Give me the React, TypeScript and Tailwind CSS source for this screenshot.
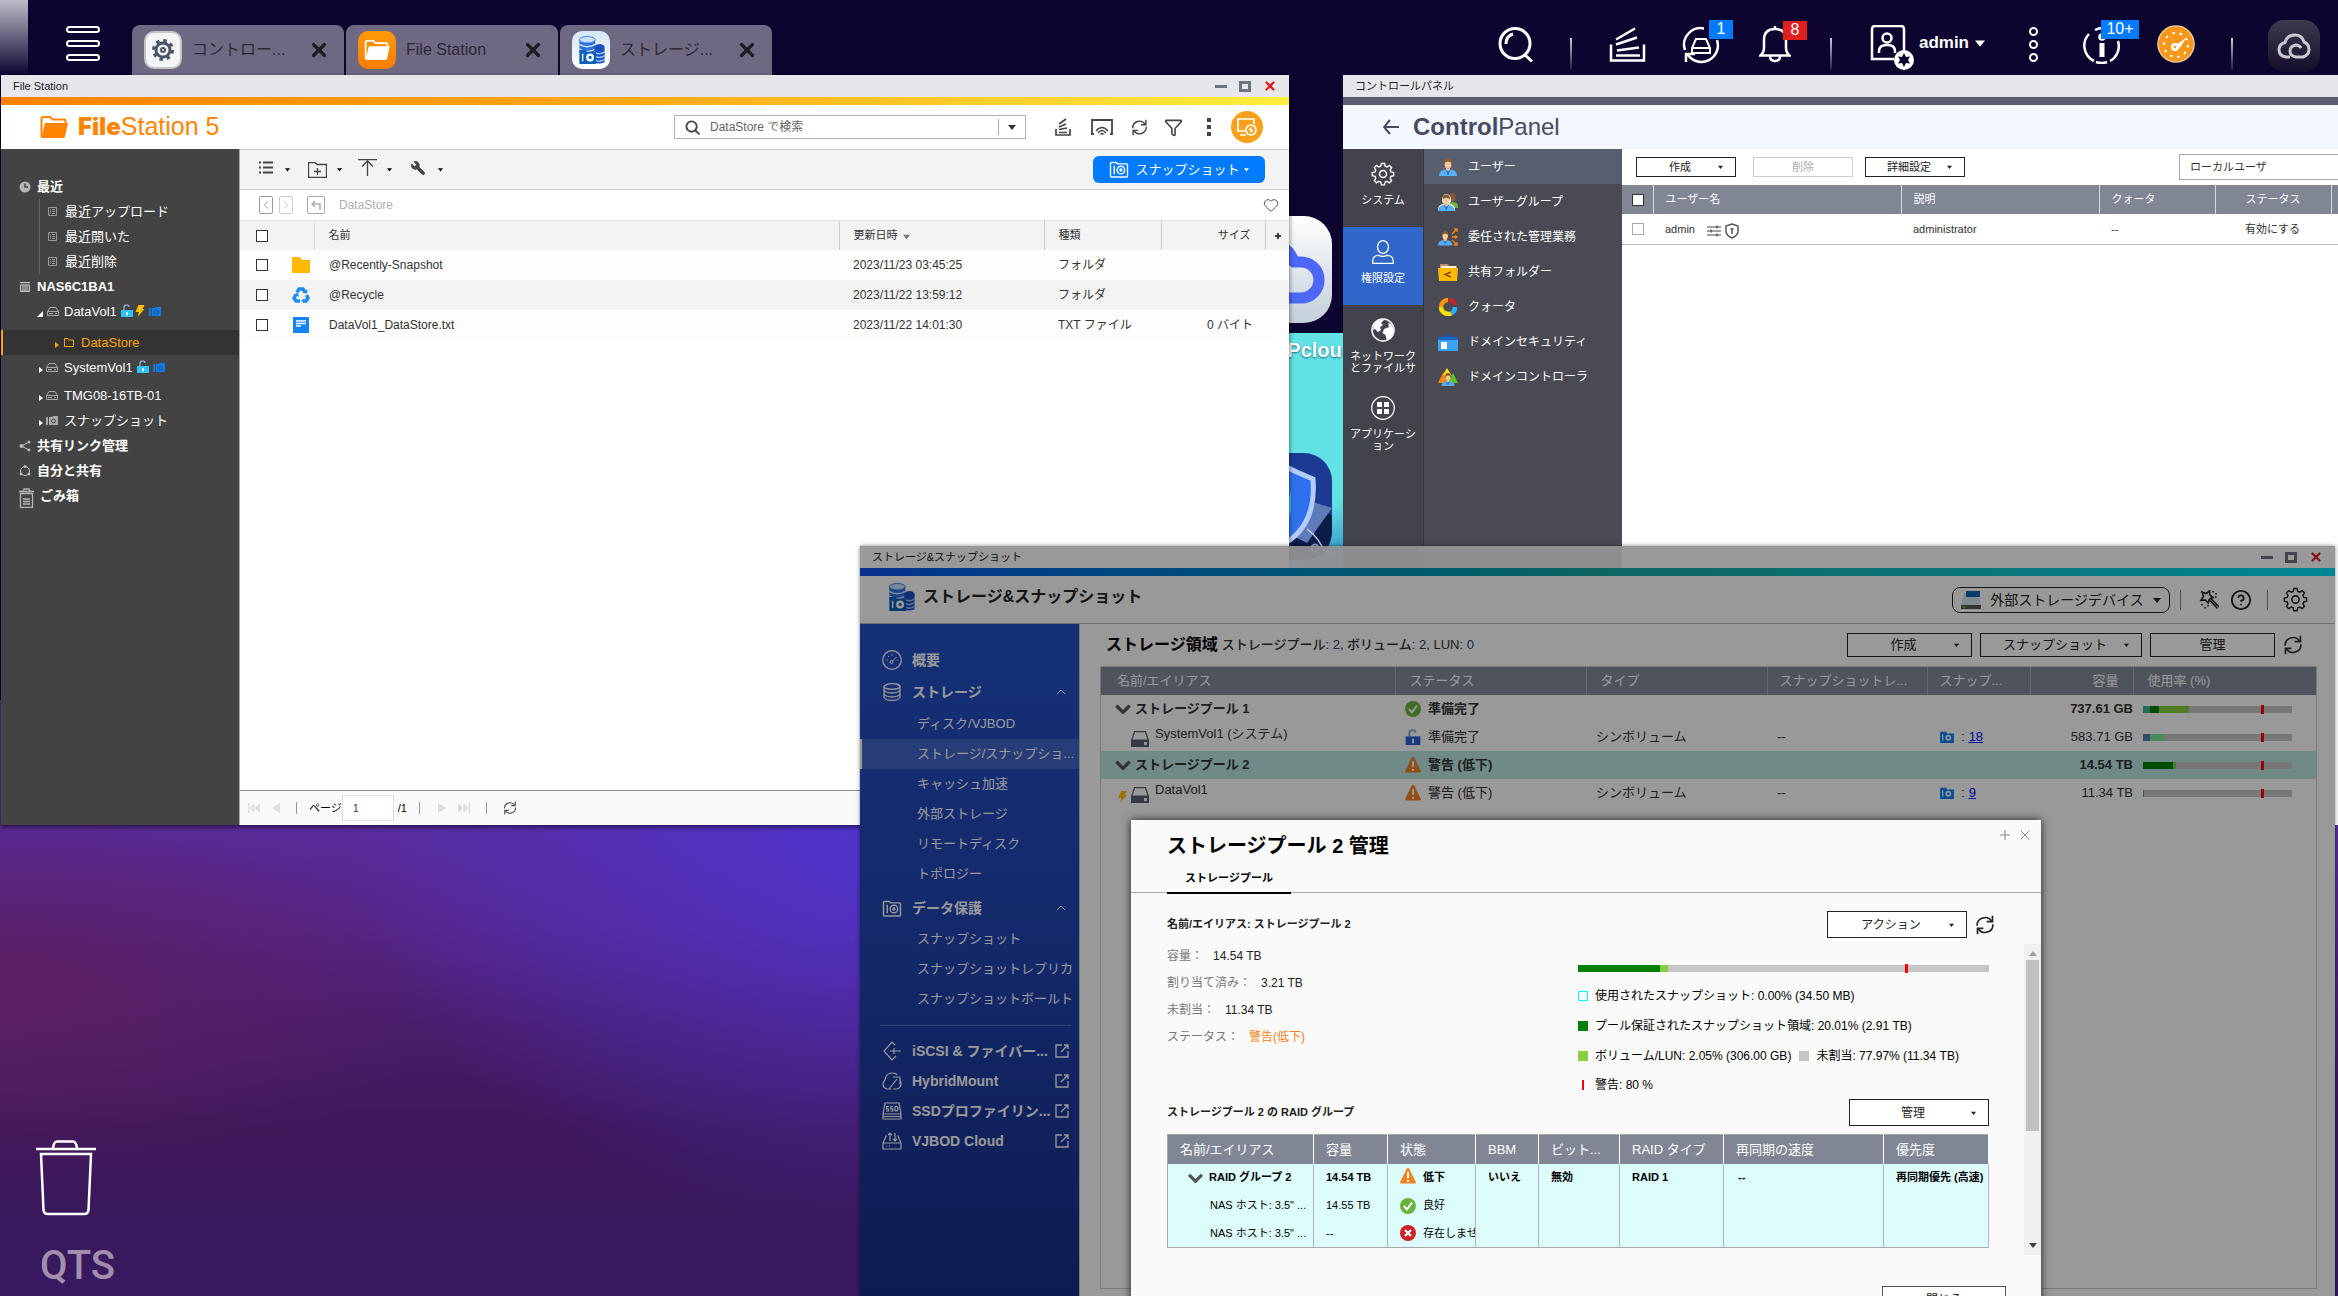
import { ReactNode } from "react";
import { ChevronUp, Filter, Heart, Wrench, Plus, X, CircleHelp, Cloud } from "lucide-react";

/* ---------- small shared pieces ---------- */

function Caret({ className = "size-2" }: { className?: string }) {
  return (
    <svg viewBox="0 0 8 8" className={className} fill="currentColor" aria-hidden="true">
      <path d="M0 2h8L4 7z" />
    </svg>
  );
}

function Refresh({ className }: { className: string }) {
  return (
    <svg viewBox="0 0 24 24" className={className} fill="none" stroke="currentColor" strokeWidth="2" aria-hidden="true">
      <path d="M2.5 13A9.5 9.5 0 0 1 20 7.500M21.500 11A9.500 9.500 0 0 1 4 16.500" />
      <path d="M21 1v7h-7M3 23v-7h7" />
    </svg>
  );
}

function Camera({ className }: { className: string }) {
  return (
    <svg viewBox="0 0 16 14" className={className} aria-hidden="true">
      <path d="M0 1h7l1 2h8v11H0z" fill="currentColor" />
      <path d="M3 4v7" stroke="#fff" strokeWidth="1.500" />
      <circle cx="9.500" cy="8" r="2.500" fill="none" stroke="#fff" strokeWidth="2" />
    </svg>
  );
}

function CameraLine({ className }: { className: string }) {
  return (
    <svg viewBox="0 0 20 18" className={className} fill="none" stroke="currentColor" strokeWidth="1.500" aria-hidden="true">
      <path d="M1 2.500a1 1 0 0 1 1-1h5l1.500 1.500H18a1 1 0 0 1 1 1V16a1 1 0 0 1-1 1H2a1 1 0 0 1-1-1zM5 5v9" />
      <circle cx="12" cy="9.500" r="4" />
      <circle cx="12" cy="9.500" r="1" fill="currentColor" />
    </svg>
  );
}

/* the sidebar's small camera: dark lens on the row colour */
function CameraMini({ className }: { className: string }) {
  return (
    <svg viewBox="0 0 12 9" className={className} aria-hidden="true">
      <path d="M0 1h2v8H0zM3 1h3l1-1h5v9H3z" fill="currentColor" />
      <circle cx="7.500" cy="5" r="2" fill="none" stroke="#434343" />
    </svg>
  );
}

function Drive({ className }: { className: string }) {
  return (
    <svg viewBox="0 0 18 16" className={className} aria-hidden="true">
      <path d="M3.500.700h11L17.300 9H.700z" fill="none" stroke="#596075" strokeWidth="1.200" />
      <path d="M0 9h18v7H0z" fill="#596075" />
      <path d="M13 11h3v3h-3z" fill="#fff" />
    </svg>
  );
}

function DriveLine({ className }: { className: string }) {
  return (
    <svg viewBox="0 0 12 11" className={className} fill="none" stroke="#aaa" aria-hidden="true">
      <path d="M3 1.500h6l2.500 4v4h-11v-4zM.500 5.500h11M2 7.500h4M8 7.500h2" />
    </svg>
  );
}

function Bolt({ className }: { className: string }) {
  return (
    <svg viewBox="0 0 9 12" className={className} aria-hidden="true">
      <path d="M3 0h6L7 4h2L2 12l1.500-5H0z" fill="#ffc000" />
    </svg>
  );
}

function Unlock({ className, body }: { className: string; body: string }) {
  return (
    <svg viewBox="0 0 12 13" className={className} aria-hidden="true">
      <path d="M3 6V3.500Q3 1 5.500 1T8 3" fill="none" stroke="#8fa5c5" strokeWidth="1.500" />
      <path d="M0 6h12v7H0z" fill={body} />
      <path d="M6 8v3.500" stroke="#fff" strokeWidth="1.500" />
    </svg>
  );
}

function Warn({ className = "size-4" }: { className?: string }) {
  return (
    <svg viewBox="0 0 16 16" className={className} aria-hidden="true">
      <path d="M8 0q1 0 1.500 1l6.300 13q.400 1.500-1 1.500H1.200q-1.400 0-1-1.500L6.500 1Q7 0 8 0z" fill="#f58220" />
      <path d="M8 4v6M8 12v2" stroke="#fff" strokeWidth="2" />
    </svg>
  );
}

function Good({ className = "size-4" }: { className?: string }) {
  return (
    <svg viewBox="0 0 16 16" className={className} fill="none" aria-hidden="true">
      <circle cx="8" cy="8" r="8" fill="#6cb33e" />
      <path d="m4 8 3 3.500 5-7" stroke="#fff" strokeWidth="2" />
    </svg>
  );
}

function Bad({ className = "size-4" }: { className?: string }) {
  return (
    <svg viewBox="0 0 16 16" className={className} fill="none" aria-hidden="true">
      <circle cx="8" cy="8" r="8" fill="#cc2127" />
      <path d="m5 5 6 6M11 5l-6 6" stroke="#fff" strokeWidth="2.200" />
    </svg>
  );
}

function Chevron({ className = "h-2 w-3.5" }: { className?: string }) {
  return (
    <svg viewBox="0 0 14 9" className={className} fill="none" stroke="#555" strokeWidth="3" aria-hidden="true">
      <path d="m1 1.500 6 6 6-6" />
    </svg>
  );
}

function Gear({ className }: { className: string }) {
  return (
    <svg viewBox="0 0 24 24" className={className} fill="none" stroke="currentColor" strokeWidth="1.500" aria-hidden="true">
      <path d="M10.300 1h3.400l.7 3 2 .800 2.600-1.600 2.400 2.400-1.600 2.600.800 2 3 .7v3.400l-3 .7-.800 2 1.600 2.600-2.400 2.400-2.600-1.600-2 .800-.7 3h-3.400l-.7-3-2-.800-2.600 1.600-2.400-2.400 1.600-2.600-.800-2-3-.7v-3.400l3-.7.800-2-1.600-2.600 2.400-2.400 2.600 1.600 2-.800z" transform="scale(.92) translate(1 .6)" />
      <circle cx="12" cy="12" r="3.500" />
    </svg>
  );
}

function StorageLogo({ className }: { className: string }) {
  return (
    <svg viewBox="0 0 28 30" className={className} aria-hidden="true">
      <path d="M1 4v14h17V4z" fill="#2f6fe0" />
      <path d="M1 9q8 5 17 0M1 14q8 5 17 0" stroke="#d4e6ff" strokeWidth="1.500" fill="none" />
      <ellipse cx="9.500" cy="4" rx="8.500" ry="3.500" fill="#c9e2ff" stroke="#2f7df0" />
      <path d="M17 11v17q5 3 11 0V11q-5-5-11 0z" fill="#1a4fc0" />
      <path d="M17 17q5 4 11 0M17 21q5 4 11 0M17 25q5 4 11 0" stroke="#9cc4ff" strokeWidth="1.500" fill="none" />
      <path d="M1 15h7l1 2h10v13H1z" fill="#0a62b8" />
      <path d="M4.500 19v8" stroke="#fff" strokeWidth="1.500" />
      <circle cx="12.500" cy="23" r="3" fill="none" stroke="#fff" strokeWidth="2.500" />
    </svg>
  );
}

function FolderLogo({ className }: { className: string }) {
  return (
    <svg viewBox="0 0 28 22" className={className} aria-hidden="true">
      <path d="M1.500 21V2.500q0-1.500 1.500-1.500h7l2.500 2.500H24q1.500 0 1.500 1.500v3" fill="none" stroke="currentColor" strokeWidth="2" />
      <path d="M5 7h23l-3 13.500q-.300 1.500-2 1.500H1.500z" fill="currentColor" />
    </svg>
  );
}

function TitleBar({ title }: { title: string }) {
  return (
    <div className="flex h-[22px] items-center bg-white/90 px-3 text-[11px] text-[#222]">
      <span className="grow whitespace-nowrap">{title}</span>
      <div className="flex items-center gap-3">
        <button aria-label="最小化" className="h-[3px] w-3 bg-[#6b7485]" />
        <button aria-label="最大化" className="h-[11px] w-3 border-[3px] border-[#6b7485]" />
        <button aria-label="閉じる">
          <X className="size-3.5 text-[#e02020]" strokeWidth={4} />
        </button>
      </div>
    </div>
  );
}

function BoxButton({ children, className, caret = true }: { children: ReactNode; className: string; caret?: boolean }) {
  return (
    <button className={`relative flex items-center justify-center border border-[#222] whitespace-nowrap text-[#222] ${className}`}>
      <span className={caret ? "pr-3" : ""}>{children}</span>
      {caret && <Caret className="absolute right-3 top-1/2 size-[5px] -translate-y-1/2" />}
    </button>
  );
}

/* ---------- top bar ---------- */

const tabs = [
  { label: "コントロー...", icon: "gear" },
  { label: "File Station", icon: "folder" },
  { label: "ストレージ...", icon: "storage" },
];

function Divider() {
  return <span className="mt-8 h-8 w-0.5 bg-linear-to-b from-white/80 to-white/10" />;
}

function TopBar() {
  return (
    <header className="relative flex h-[75px] items-end justify-between text-white">
      <div className="flex items-end">
        <div className="h-[75px] w-7 bg-linear-to-b from-[#bdbdc9] to-transparent" />
        <button aria-label="メニュー" className="mb-3.5 ml-[38px] mr-8 flex flex-col gap-[7px]">
          <span className="h-[7px] w-[34px] rounded-sm border-2 border-white" />
          <span className="h-[7px] w-[34px] rounded-sm border-2 border-white" />
          <span className="h-[7px] w-[34px] rounded-sm border-2 border-white" />
        </button>
        <div className="flex gap-0.5">
          {tabs.map((t) => (
            <div key={t.label} className="flex h-[50px] w-[212px] items-center rounded-t-lg bg-[#6e6883] pl-3 pr-3.5 text-[#2c2a35]">
              {t.icon === "gear" && (
                <span className="flex size-[38px] items-center justify-center rounded-[10px] border-2 border-[#c4c4c4] bg-[#f3f5f7]">
                  <svg viewBox="0 0 24 24" className="size-6" fill="none" stroke="#4a5468" aria-hidden="true">
                    <circle cx="12" cy="12" r="7" strokeWidth="3" />
                    <circle cx="12" cy="12" r="9.500" strokeWidth="3" strokeDasharray="3.500 3.960" />
                    <circle cx="12" cy="12" r="2" strokeWidth="2" />
                  </svg>
                </span>
              )}
              {t.icon === "folder" && (
                <span className="flex size-[38px] items-center justify-center rounded-[10px] bg-linear-to-b from-[#ff9a0a] to-[#f97d00] text-white">
                  <FolderLogo className="h-5 w-[26px]" />
                </span>
              )}
              {t.icon === "storage" && (
                <span className="flex size-[38px] items-center justify-center rounded-[10px] bg-linear-to-b from-[#d5e6f6] to-white">
                  <StorageLogo className="h-7 w-[29px]" />
                </span>
              )}
              <span className="ml-2.5 grow text-base whitespace-nowrap">{t.label}</span>
              <button aria-label="閉じる">
                <X className="size-[22px] text-[#1d1d22]" strokeWidth={3.5} />
              </button>
            </div>
          ))}
        </div>
      </div>

      <div className="flex h-[75px] items-center pr-[18px]">
        <button aria-label="検索" className="mt-3.5">
          <svg viewBox="0 0 36 36" className="size-9" fill="none" stroke="#fff" strokeWidth="3" aria-hidden="true">
            <circle cx="17" cy="16.500" r="15" />
            <path d="m27 28 7 6.500M8 17q0-8 7-10" />
          </svg>
        </button>
        <span className="w-9" />
        <Divider />
        <span className="w-[37px]" />
        <button aria-label="バックグラウンドタスク" className="mt-3.5">
          <svg viewBox="0 0 37 35" className="h-9 w-[37px]" fill="none" stroke="#fff" strokeWidth="2.500" aria-hidden="true">
            <path d="M2 17v16h33V17M7 28h24M8 23l22-3M7 17l21-7M7 12 26 1" />
          </svg>
        </button>
        <button aria-label="外部デバイス" className="relative mt-3.5 ml-9">
          <svg viewBox="0 0 38 38" className="size-[38px]" fill="none" stroke="#fff" strokeWidth="2.500" aria-hidden="true">
            <path d="M3 24A16.500 16.500 0 0 1 22 2.500M35 14A16.500 16.500 0 0 1 6 29M4 36v-8h9" />
            <path d="M14 13h10l4 9v5H10v-5zM10 22h18" strokeWidth="2" />
          </svg>
          <span className="absolute -top-1.5 left-[27px] flex h-[19px] w-6 items-center justify-center bg-[#007bff] text-base">1</span>
        </button>
        <button aria-label="通知" className="relative mt-3 ml-[39px]">
          <svg viewBox="0 0 32 38" className="h-[38px] w-8" fill="none" stroke="#fff" strokeWidth="2.500" aria-hidden="true">
            <path d="M16 1v3M1.500 30.500q3.500-3 3.500-8V15q0-11 11-11t11 11v7.500q0 5 3.500 8zM11 31q0 5 5 5t5-5" />
          </svg>
          <span className="absolute -top-1 left-6 flex h-[19px] w-6 items-center justify-center bg-[#e02020] text-base">8</span>
        </button>
        <span className="w-[39px]" />
        <Divider />
        <button className="mt-5 ml-[37px] flex items-center text-[17px] font-bold">
          <svg viewBox="0 0 46 46" className="size-[46px]" fill="none" stroke="#fff" strokeWidth="2.500" aria-hidden="true">
            <path d="M25 34H3V4q0-3 3-3h26q3 0 3 3v22" />
            <circle cx="18" cy="13" r="4.500" />
            <path d="M10 28v-2q0-6 8-6t8 6v2" />
            <circle cx="35" cy="35" r="10" fill="#fff" stroke="none" />
            <path d="m35 28 2 4 4-.500-2 3.500 2 3.500-4-.500-2 4-2-4-4 .500 2-3.500-2-3.500 4 .500z" fill="#0d0430" stroke="none" />
          </svg>
          <span className="mb-2.5 ml-1">admin</span>
          <Caret className="mb-2.5 ml-1.5 size-2.5" />
        </button>
        <button aria-label="その他" className="mt-3.5 ml-11 flex flex-col gap-1">
          <span className="size-[9px] rounded-full border-2 border-white" />
          <span className="size-[9px] rounded-full border-2 border-white" />
          <span className="size-[9px] rounded-full border-2 border-white" />
        </button>
        <button aria-label="お知らせ" className="relative mt-3.5 ml-[45px]">
          <svg viewBox="0 0 38 38" className="size-[38px]" fill="none" stroke="#fff" strokeWidth="2.500" aria-hidden="true">
            <path d="M11 35A17 17 0 0 1 6 8M12 4a17 17 0 0 1 8-2M35 15a17 17 0 0 1-8 20M13 36q6 2 11 0" />
            <path d="M19 17v14" strokeWidth="5" />
            <circle cx="19" cy="11" r="2.500" fill="#fff" />
          </svg>
          <span className="absolute -top-1.5 left-[18px] flex h-[19px] w-[38px] items-center justify-center bg-[#007bff] text-base">10+</span>
        </button>
        <button aria-label="ダッシュボード" className="mt-3 ml-9">
          <svg viewBox="0 0 38 38" className="size-[38px]" aria-hidden="true">
            <circle cx="19" cy="19" r="18" fill="#f7981c" stroke="#e8c890" strokeWidth="1.500" />
            <circle cx="19" cy="20" r="12" fill="none" stroke="#fff" strokeWidth="2" strokeDasharray="2.500 5" pathLength="75" />
            <circle cx="18" cy="22" r="4" fill="#fff" />
            <circle cx="18" cy="22" r="1.300" fill="#f7981c" />
            <path d="m19 20 10-7-6 10z" fill="#fff" />
          </svg>
        </button>
        <span className="w-9" />
        <Divider />
        <button aria-label="クラウド" className="mt-4 ml-[35px] flex size-[52px] items-center justify-center rounded-2xl bg-linear-to-b from-[#403a4e] to-[#150d2a]">
          <svg viewBox="0 0 34 26" className="h-[26px] w-[34px]" fill="none" stroke="#c9c9d2" strokeWidth="3" aria-hidden="true">
            <path d="M13 24H9q-7-1-7-7.500Q2 11 8 9.500 10 2 18 2q7 0 9 7 5 2 5 7.500T26 24h-7q-6-1-6-6t6-6q3 0 5 3" />
          </svg>
        </button>
      </div>
    </header>
  );
}

/* ---------- File Station ---------- */

function TreeRow({ children, className = "pl-5" }: { children: ReactNode; className?: string }) {
  return <li className={`flex h-[25px] items-center whitespace-nowrap ${className}`}>{children}</li>;
}

function TreeArrow({ open = false, className = "text-white" }: { open?: boolean; className?: string }) {
  return (
    <svg viewBox="0 0 6 6" className={`mt-1 size-1.5 ${className}`} fill="currentColor" aria-hidden="true">
      <path d={open ? "M6 0v6H0z" : "M1 0l4 3-4 3z"} />
    </svg>
  );
}

function ListGlyph() {
  return (
    <svg viewBox="0 0 9 9" className="mr-2 ml-0.5 size-[9px]" fill="none" stroke="#999" aria-hidden="true">
      <path d="M.500.500h8v8h-8z" />
      <path d="M2 2.500h1M4 2.500h3M2 4.500h1M4 4.500h3M2 6.500h1M4 6.500h3" />
    </svg>
  );
}

const recents = ["最近アップロード", "最近開いた", "最近削除"];

function FileTree() {
  return (
    <nav className="w-[238px] shrink-0 bg-[#434343] pt-[25px] text-[13px] text-white">
      <ul>
        <TreeRow className="pl-[18px] font-bold">
          <svg viewBox="0 0 12 12" className="mr-1.5 size-3" aria-hidden="true">
            <circle cx="6" cy="6" r="5.500" fill="#b5b5b5" />
            <path d="M6 2.500V6h3" fill="none" stroke="#434343" strokeWidth="1.500" />
          </svg>
          最近
        </TreeRow>
        {recents.map((r) => (
          <TreeRow key={r} className="ml-[38px] border-l border-[#666] pl-1.5">
            <ListGlyph />
            {r}
          </TreeRow>
        ))}
        <TreeRow className="pl-[19px] font-bold">
          <svg viewBox="0 0 10 10" className="mr-[7px] size-2.5" fill="none" stroke="#c4c4c4" strokeWidth="1.200" aria-hidden="true">
            <path d="M0 .600h10M0 3h10M.600 3v6.400h8.800V3M3 3v6M5 3v6M7 3v6" />
          </svg>
          NAS6C1BA1
        </TreeRow>
        <TreeRow className="mb-1.5 pl-9">
          <TreeArrow open />
          <DriveLine className="mr-[5px] ml-1 h-[11px] w-3" />
          DataVol1
          <Unlock className="mb-0.5 ml-1 h-[13px] w-3" body="#2ec4fa" />
          <Bolt className="mb-0.5 ml-0.5 h-3 w-2.5" />
          <CameraMini className="ml-1 h-[9px] w-3 text-[#0a7cff]" />
        </TreeRow>
        <TreeRow className="mb-0 border-l-2 border-[#ffa200] bg-[#333] pl-[51px] text-[#ffa200]">
          <TreeArrow className="text-[#ffa200]" />
          <svg viewBox="0 0 10 9" className="mr-[7px] ml-1 h-[9px] w-2.5" fill="none" stroke="currentColor" aria-hidden="true">
            <path d="M.500.500H4l1 1.500h4.500v6.500h-9z" />
          </svg>
          DataStore
        </TreeRow>
        <TreeRow className="mb-[3px] pl-[37px]">
          <TreeArrow />
          <DriveLine className="mr-1.5 ml-0.5 h-[11px] w-3" />
          SystemVol1
          <Unlock className="mb-0.5 ml-1 h-[13px] w-3" body="#2ec4fa" />
          <CameraMini className="ml-1 h-[9px] w-3 text-[#0a7cff]" />
        </TreeRow>
        <TreeRow className="pl-[37px]">
          <TreeArrow />
          <DriveLine className="mr-1.5 ml-0.5 h-[11px] w-3" />
          TMG08-16TB-01
        </TreeRow>
        <TreeRow className="pl-[37px]">
          <TreeArrow />
          <CameraMini className="mr-1.5 ml-0.5 h-[9px] w-3 text-[#aaa]" />
          スナップショット
        </TreeRow>
        <TreeRow className="pl-[18px] font-bold">
          <svg viewBox="0 0 12 12" className="mr-1.5 size-3" fill="#c4c4c4" stroke="#c4c4c4" aria-hidden="true">
            <circle cx="2.500" cy="6" r="1.500" />
            <circle cx="10" cy="2" r="1" />
            <circle cx="10" cy="10" r="1" />
            <path d="M10 2 2.500 6l7.500 4" fill="none" />
          </svg>
          共有リンク管理
        </TreeRow>
        <TreeRow className="pl-[18px] font-bold">
          <svg viewBox="0 0 12 12" className="mr-1.5 size-3" fill="#c4c4c4" stroke="#c4c4c4" aria-hidden="true">
            <circle cx="6" cy="6" r="4.500" fill="none" />
            <circle cx="6" cy="1.500" r="1" />
            <circle cx="2" cy="9" r="1" />
            <circle cx="10" cy="9" r="1" />
          </svg>
          自分と共有
        </TreeRow>
        <TreeRow className="pl-[18px] font-bold">
          <svg viewBox="0 0 15 20" className="mt-1 mr-1.5 h-5 w-[15px]" fill="none" stroke="#b5b5b5" strokeWidth="1.300" aria-hidden="true">
            <path d="M0 3.500h15M4 3.500 5 1h5l1 2.500M1.500 5.500v13.800h12V5.500zM4 11h7M4 13.500h7M4 16h7" />
          </svg>
          ごみ箱
        </TreeRow>
      </ul>
    </nav>
  );
}

function FileIcon({ kind }: { kind: string }) {
  if (kind === "folder")
    return (
      <svg viewBox="0 0 18 16" className="h-4 w-[18px]" aria-hidden="true">
        <path d="M0 0h8l2 3h8v13H0z" fill="#ffb900" />
      </svg>
    );
  if (kind === "recycle")
    return (
      <svg viewBox="0 0 18 16" className="h-4 w-[18px]" fill="none" stroke="#1a8cf5" strokeWidth="3.500" aria-hidden="true">
        <path d="m5 5.500 2-3.500h4l2 3M14.500 8l1.500 3-2 3h-3M8 14H4l-2-3 2-3.500" />
        <path d="m10.500 6 4.500.500.500-4.500zM12 11.500v4.500l-3-2.300zM2 7l4-1 1 4z" fill="#1a8cf5" stroke="none" />
      </svg>
    );
  return (
    <svg viewBox="0 0 16 16" className="mx-px size-4" aria-hidden="true">
      <path d="M0 0h16v16H0z" fill="#1583f2" />
      <path d="M3 4h10M3 6.500h10M3 9h5" stroke="#fff" strokeWidth="1.400" />
    </svg>
  );
}

const files = [
  { name: "@Recently-Snapshot", date: "2023/11/23 03:45:25", type: "フォルダ", size: "", icon: "folder" },
  { name: "@Recycle", date: "2023/11/22 13:59:12", type: "フォルダ", size: "", icon: "recycle" },
  { name: "DataVol1_DataStore.txt", date: "2023/11/22 14:01:30", type: "TXT ファイル", size: "0 バイト", icon: "txt" },
];

function FileStation() {
  return (
    <section className="absolute top-[75px] left-px flex h-[750px] w-[1288px] flex-col shadow-[0_2px_5px_rgba(0,0,0,0.6)]">
      <TitleBar title="File Station" />
      <div className="h-2 bg-linear-to-r from-[#ff8200] via-[#ffa915] to-[#ffee3c]" />
      <div className="flex h-11 items-center bg-white pr-[26px] pl-[39px]">
        <div className="flex items-center text-[#ff8400]">
          <FolderLogo className="h-[22px] w-7" />
          <h1 className="ml-2.5 text-[25px]">
            <span className="font-['Inter'] text-2xl font-black">File</span>Station 5
          </h1>
        </div>
        <div className="ml-auto flex h-6 w-[352px] items-center border border-[#b4b4b4] text-xs text-[#555]">
          <svg viewBox="0 0 16 16" className="mx-2.5 size-[15px]" fill="none" stroke="#444" strokeWidth="2" aria-hidden="true">
            <circle cx="7" cy="7" r="5.500" />
            <path d="m11 11 4.500 4.500" />
          </svg>
          <input aria-label="検索" placeholder="DataStore で検索" className="min-w-0 grow text-xs outline-none placeholder:text-[#666]" />
          <button aria-label="検索オプション" className="flex h-4 w-[27px] items-center justify-center border-l border-[#aaa] text-[#333]">
            <Caret />
          </button>
        </div>
        <div className="ml-[29px] flex items-center text-[#444]">
          <button aria-label="タスク">
            <svg viewBox="0 0 16 18" className="h-[18px] w-4" fill="none" stroke="currentColor" strokeWidth="1.700" aria-hidden="true">
              <path d="M1 11v6h14v-6M4 14.500h8M4 11.500l8-1.500M4 9l7-3M4 6l7-5" />
            </svg>
          </button>
          <button aria-label="キャスト" className="ml-5">
            <svg viewBox="0 0 22 16" className="h-4 w-[22px]" fill="none" stroke="currentColor" strokeWidth="1.800" aria-hidden="true">
              <path d="M3 15H1V1h20v14h-2" />
              <path d="M5 12q6-7 12 0M7 14q4-5 8 0M9.500 15.500q1.500-2 3 0" strokeWidth="1.300" />
            </svg>
          </button>
          <button aria-label="更新" className="ml-[18px]">
            <Refresh className="size-[17px]" />
          </button>
          <button aria-label="フィルター" className="ml-4">
            <Filter className="size-[19px]" />
          </button>
          <button aria-label="その他" className="ml-6 flex flex-col gap-[3px]">
            <span className="size-1 bg-current" />
            <span className="size-1 bg-current" />
            <span className="size-1 bg-current" />
          </button>
          <button aria-label="リモート接続" className="ml-5 flex size-8 items-center justify-center rounded-full bg-[#f9a11b]">
            <svg viewBox="0 0 20 18" className="h-[18px] w-5" fill="none" stroke="#fff" strokeWidth="1.700" aria-hidden="true">
              <path d="M8 13H1V1h16v5M3 17h6" />
              <circle cx="14" cy="12" r="5" />
              <path d="m12 12 2-2v4l2-2" strokeWidth="1.200" />
            </svg>
          </button>
        </div>
      </div>
      <div className="flex min-h-0 grow">
        <FileTree />
        <div className="flex grow flex-col border-t border-l border-t-[#ccc] border-l-[#8fb0bd] bg-white">
          <div className="flex h-10 items-center border-b border-[#ccc] bg-[#f3f3f3] pr-6 pl-[19px] text-[#444]">
            <button aria-label="表示" className="flex items-center gap-3">
              <svg viewBox="0 0 14 13" className="mb-1 h-[13px] w-3.5" stroke="currentColor" strokeWidth="2" aria-hidden="true">
                <path d="M0 1.500h2M4 1.500h10M0 6.500h2M4 6.500h10M0 11.500h2M4 11.500h10" />
              </svg>
              <Caret className="size-[5px] text-black" />
            </button>
            <button aria-label="フォルダ作成" className="ml-[18px] flex items-center gap-2.5">
              <svg viewBox="0 0 19 16" className="h-4 w-[19px]" fill="none" stroke="currentColor" aria-hidden="true">
                <path d="M.500.500H7l2 2h9.500v13H.500zM9.500 6v7M6 9.500h7" strokeWidth="1.300" />
              </svg>
              <Caret className="size-[5px] text-black" />
            </button>
            <button aria-label="アップロード" className="ml-4 flex items-center gap-2.5">
              <svg viewBox="0 0 19 17" className="mb-1 h-[17px] w-[19px]" fill="none" stroke="currentColor" strokeWidth="1.300" aria-hidden="true">
                <path d="M0 .700h19M9.500 2v15M4 7.500l5.500-5.500L15 7.500" />
              </svg>
              <Caret className="size-[5px] text-black" />
            </button>
            <button aria-label="ツール" className="ml-[18px] flex items-center gap-3">
              <Wrench className="mb-1 size-4 -scale-x-100 fill-current" strokeWidth={1} />
              <Caret className="size-[5px] text-black" />
            </button>
            <button className="ml-auto flex h-[27px] w-[172px] items-center justify-center rounded-md bg-[#007bff] text-[13px] whitespace-nowrap text-white">
              <CameraLine className="mr-1.5 h-[17px] w-5" />
              スナップショット
              <Caret className="ml-1 size-[5px]" />
            </button>
          </div>
          <div className="flex h-[31px] items-center border-b border-[#e4e4e4] pr-2.5 pl-[19px] text-xs text-[#b0b0b0]">
            <button aria-label="戻る" className="mr-1.5 flex h-[18px] w-3.5 items-center justify-center rounded-xs border border-[#999]">
              <svg viewBox="0 0 6 10" className="h-2 w-1.5" fill="none" stroke="#888" aria-hidden="true">
                <path d="M5.500.500 1 5l4.500 4.500" />
              </svg>
            </button>
            <button aria-label="進む" className="mr-3.5 flex h-[18px] w-3.5 items-center justify-center rounded-xs border border-[#ccc]">
              <svg viewBox="0 0 6 10" className="h-2 w-1.5" fill="none" stroke="#bbb" aria-hidden="true">
                <path d="M.500.500 5 5 .500 9.500" />
              </svg>
            </button>
            <button aria-label="上へ" className="mr-3.5 flex h-[18px] w-[18px] items-center justify-center rounded-xs border border-[#aaa]">
              <svg viewBox="0 0 10 10" className="size-2.5" fill="none" stroke="#aaa" strokeWidth="1.500" aria-hidden="true">
                <path d="M4 1 1 4l3 3M1 4h8v6" />
              </svg>
            </button>
            DataStore
            <button aria-label="お気に入り" className="ml-auto text-[#555]">
              <Heart className="size-4" strokeWidth={1.5} />
            </button>
          </div>
          <table className="w-full table-fixed text-xs text-[#333]">
            <colgroup>
              <col className="w-[74px]" />
              <col />
              <col className="w-[205px]" />
              <col className="w-[117px]" />
              <col className="w-[104px]" />
              <col className="w-6" />
            </colgroup>
            <thead>
              <tr className="h-[29px] bg-[#f3f3f3] text-left text-[11px] *:font-normal">
                <th className="pl-4">
                  <input type="checkbox" aria-label="すべて選択" className="block size-3 appearance-none border border-[#333] bg-white" />
                </th>
                <th className="border-l border-[#ddd] pl-3.5">名前</th>
                <th className="border-l border-[#ccc] pl-3.5">
                  更新日時 <Caret className="ml-0.5 inline size-[7px] text-[#777]" />
                </th>
                <th className="border-l border-[#ccc] pl-3.5">種類</th>
                <th className="border-l border-[#ccc] pr-3.5 text-right">サイズ</th>
                <th className="border-l border-[#ccc] pl-2">
                  <Plus className="size-2" strokeWidth={6} />
                </th>
              </tr>
            </thead>
            <tbody>
              {files.map((f) => (
                <tr key={f.name} className="h-[30px] bg-[#fdfdfd] even:bg-[#f3f3f3]">
                  <td className="pl-4">
                    <span className="flex items-center gap-6">
                      <input type="checkbox" aria-label={f.name} className="size-3 shrink-0 appearance-none border border-[#333] bg-white" />
                      <span className="shrink-0">
                        <FileIcon kind={f.icon} />
                      </span>
                    </span>
                  </td>
                  <td className="pl-[15px]">{f.name}</td>
                  <td className="pl-3.5">{f.date}</td>
                  <td className="pl-3.5">{f.type}</td>
                  <td className="pr-3 text-right">{f.size}</td>
                  <td />
                </tr>
              ))}
            </tbody>
          </table>
          <div className="mt-auto flex h-[35px] items-center border-t border-[#888] bg-[#fafafa] pl-2 text-[11px] text-black">
            <span className="flex gap-3 text-[#ddd]">
              <svg viewBox="0 0 12 10" className="h-2.5 w-3" fill="currentColor" aria-hidden="true">
                <path d="M0 0h1.500v10H0zM6.500 0v10L2 5zM12 0v10L7 5z" />
              </svg>
              <svg viewBox="0 0 8 10" className="h-2.5 w-2" fill="currentColor" aria-hidden="true">
                <path d="M8 0v10L0 5z" />
              </svg>
            </span>
            <span className="mr-3 ml-4 h-3 w-px bg-[#999]" />
            <label htmlFor="page">ページ</label>
            <input id="page" defaultValue="1" className="mr-1 h-[26px] w-[52px] border border-[#ddd] bg-white pl-2.5 text-[#338]" />
            /1
            <span className="mx-3 h-3 w-px bg-[#999]" />
            <span className="ml-1.5 flex gap-3 text-[#ddd]">
              <svg viewBox="0 0 8 10" className="h-2.5 w-2" fill="currentColor" aria-hidden="true">
                <path d="M0 0v10l8-5z" />
              </svg>
              <svg viewBox="0 0 12 10" className="h-2.5 w-3" fill="currentColor" aria-hidden="true">
                <path d="M0 0v10l5-5zM5.500 0v10L10 5zM10.500 0H12v10h-1.500z" />
              </svg>
            </span>
            <span className="mx-4 h-3 w-px bg-[#999]" />
            <button aria-label="更新">
              <Refresh className="size-3.5 text-[#555]" />
            </button>
          </div>
        </div>
      </div>
    </section>
  );
}

/* ---------- Control Panel ---------- */

function Person({ x = 0, y = 0 }: { x?: number; y?: number }) {
  return (
    <g transform={`translate(${x} ${y})`}>
      <path d="M0 18q0-5 5-6.500h8q5 1.500 5 6.500z" fill="#55b0f5" />
      <path d="m6 11 3 6 3-6z" fill="#2c6fd0" />
      <path d="M7 9h4v3q-2 2-4 0z" fill="#e8b583" />
      <ellipse cx="9" cy="6" rx="3.500" ry="4.500" fill="#f6c99a" />
      <path d="M5 6q-.500-6 4-6t4 6q-1-2.500-4-2.500T5 6z" fill="#8a5a35" />
    </g>
  );
}

function MenuIcon({ kind }: { kind: string }) {
  return (
    <svg viewBox="0 0 20 18" className="h-[18px] w-5" aria-hidden="true">
      {kind === "user" && <Person x={1} />}
      {kind === "group" && (
        <>
          <path d="M10 15q0-5 4-6 6 0 6 4v2z" fill="#6cb33e" />
          <ellipse cx="14" cy="4.500" rx="3.500" ry="4.500" fill="#8a5a35" />
          <g stroke="#fff" strokeWidth="2">
            <path d="M1 17q0-4 4-5h7q4 1 4 5z" />
            <ellipse cx="8.500" cy="6.500" rx="3.500" ry="4.500" />
          </g>
          <g transform="translate(0 1.500) scale(.92)">
            <Person />
          </g>
        </>
      )}
      {kind === "delegate" && (
        <>
          <g transform="translate(0 3) scale(.8)">
            <Person />
          </g>
          <path d="m14 6 4-4M14 9h5M14 12l4 4M16 1h3v3M17 7.500l2 1.500-2 1.500M16 17h3v-3" fill="none" stroke="#ff8a00" strokeWidth="1.300" />
        </>
      )}
      {kind === "share" && (
        <>
          <path d="M2 1h8l1 2h8v4H2z" fill="#b98b66" />
          <path d="M3 3h15v4H3z" fill="#fff2d0" />
          <path d="M0 5h20l-1 13H1z" fill="#ffb900" />
          <path d="m13 9-6 2.500 6 2.500" fill="none" stroke="#8a4b10" strokeWidth="1.500" />
        </>
      )}
      {kind === "quota" && (
        <g fill="none" strokeWidth="4.500">
          <path d="M10 16A7 7 0 0 1 3 9" stroke="#ffe000" />
          <path d="M3 9a7 7 0 0 1 7-7" stroke="#ff9200" />
          <path d="M11 2q5 0 6 5" stroke="#c4242b" />
          <path d="M17 9a7 7 0 0 1-4 6.500" stroke="#29b0f5" />
          <path d="M13 15.500q-2 1-5 .300" stroke="#ffe000" />
        </g>
      )}
      {kind === "security" && (
        <>
          <path d="m7 0 3 3 3-3v5H7z" fill="#1052a5" />
          <path d="M0 4h20v14H0z" fill="#3ba3f5" />
          <path d="M0 4h20v3H0z" fill="#1766c8" />
          <path d="M3 9h6v7H3z" fill="#fff" />
        </>
      )}
      {kind === "controller" && (
        <>
          <path d="m9 0 5 8H4z" fill="#ffe000" />
          <path d="M0 15 5 5l5 10z" fill="#ff8a00" />
          <path d="m10 15 5-10 5 10z" fill="#58c322" />
          <g transform="translate(3.500 5) scale(.72)">
            <Person />
          </g>
        </>
      )}
    </svg>
  );
}

const cpMenu = [
  { label: "ユーザー", icon: "user" },
  { label: "ユーザーグループ", icon: "group" },
  { label: "委任された管理業務", icon: "delegate" },
  { label: "共有フォルダー", icon: "share" },
  { label: "クォータ", icon: "quota" },
  { label: "ドメインセキュリティ", icon: "security" },
  { label: "ドメインコントローラ", icon: "controller" },
];

function CpTab({ children, label, active = false }: { children: ReactNode; label: string; active?: boolean }) {
  return (
    <button className={`flex h-[78px] w-full flex-col items-center pt-[13px] ${active ? "bg-[#3167c8]" : ""}`}>
      {children}
      <span className="mt-2 w-[68px] text-[11px] leading-3">{label}</span>
    </button>
  );
}

function ControlPanel() {
  return (
    <section className="absolute top-[75px] left-[1343px] flex h-[750px] w-[1080px] flex-col">
      <TitleBar title="コントロールパネル" />
      <div className="h-2 bg-[#5b5d73]" />
      <div className="flex h-11 items-center bg-[#f3f8ff] pl-10 text-[#474a63]">
        <button aria-label="戻る">
          <svg viewBox="0 0 16 16" className="size-4" fill="none" stroke="currentColor" strokeWidth="2" aria-hidden="true">
            <path d="M7 1 1 8l6 7M1 8h15" />
          </svg>
        </button>
        <h1 className="ml-3.5 text-2xl">
          <b>Control</b>Panel
        </h1>
      </div>
      <div className="flex min-h-0 grow">
        <nav className="w-20 shrink-0 bg-[#43434c] text-white">
          <CpTab label="システム">
            <Gear className="size-6" />
          </CpTab>
          <CpTab label="権限設定" active>
            <svg viewBox="0 0 22 24" className="h-6 w-[22px]" fill="none" stroke="#fff" strokeWidth="1.300" aria-hidden="true">
              <ellipse cx="11" cy="7" rx="5.500" ry="6.300" />
              <path d="M.700 23.300v-2q0-6 6-6 4 2 8.500 0 6 0 6 6v2z" />
            </svg>
          </CpTab>
          <CpTab label="ネットワークとファイルサ">
            <svg viewBox="0 0 24 24" className="size-6" aria-hidden="true">
              <circle cx="12" cy="12" r="11" fill="none" stroke="#fff" strokeWidth="1.500" />
              <path d="M4 5q4-4 9-3l-3 3 2 2-3 2 1 3-3 2-3-3-2 1q0-4 2-7zM13 11l5-2-1-4 3 1q3 4 2.500 8l-3 6-4 2-1-5-3-2z" fill="#fff" />
            </svg>
          </CpTab>
          <CpTab label="アプリケーション">
            <svg viewBox="0 0 24 24" className="size-6" aria-hidden="true">
              <circle cx="12" cy="12" r="11.300" fill="none" stroke="#fff" strokeWidth="1.200" />
              <path d="M6 6h5v5H6zM13 6h5v5h-5zM6 13h5v5H6zM13 13h5v5h-5z" fill="#fff" />
            </svg>
          </CpTab>
        </nav>
        <nav className="w-[199px] shrink-0 border-l border-[#37373a] bg-[#494a53] text-xs text-white">
          {cpMenu.map((m) => (
            <button key={m.label} className="flex h-[35px] w-full items-center gap-2.5 pl-3.5 whitespace-nowrap first:bg-[#565e6f]">
              <MenuIcon kind={m.icon} />
              {m.label}
            </button>
          ))}
        </nav>
        <div className="grow bg-white text-[11px] text-[#333]">
          <div className="flex h-9 items-center pl-3.5">
            <BoxButton className="h-5 w-[100px]">作成</BoxButton>
            <button disabled className="ml-[17px] h-5 w-[100px] border border-[#ccc] text-[#aaa]">
              削除
            </button>
            <BoxButton className="ml-3 h-5 w-[100px]">詳細設定</BoxButton>
            <select aria-label="ユーザーの種類" className="ml-[214px] h-[26px] w-[170px] appearance-none border border-[#aaa] pl-2.5">
              <option>ローカルユーザ</option>
            </select>
          </div>
          <table className="w-full table-fixed">
            <colgroup>
              <col className="w-[31px]" />
              <col className="w-[248px]" />
              <col className="w-[198px]" />
              <col className="w-[116px]" />
              <col className="w-[116px]" />
              <col />
            </colgroup>
            <thead>
              <tr className="h-[29px] bg-[#808694] text-left text-white *:border-l *:border-white/70 *:font-normal">
                <th className="border-l-0! pl-2.5">
                  <input type="checkbox" aria-label="すべて選択" className="block size-3 appearance-none border border-[#333] bg-white" />
                </th>
                <th className="pl-3">ユーザー名</th>
                <th className="pl-3">説明</th>
                <th className="pl-3">クォータ</th>
                <th className="pl-[30px]">ステータス</th>
                <th />
              </tr>
            </thead>
            <tbody>
              <tr className="h-[30px] border-b border-[#bbb]">
                <td className="pl-2.5">
                  <input type="checkbox" aria-label="admin" className="block size-3 appearance-none border border-[#aaa] bg-white" />
                </td>
                <td className="pl-3">
                  <span className="flex items-center gap-1">
                    admin
                    <svg viewBox="0 0 14 12" className="mt-1 ml-2 h-3 w-3.5" fill="none" stroke="#444" strokeWidth="1.200" aria-hidden="true">
                      <path d="M0 2h14M0 6h14M0 10h14M10 .500v3M4 4.500v3M10 8.500v3" />
                    </svg>
                    <svg viewBox="0 0 14 16" className="mt-1 h-4 w-3.5" fill="none" stroke="#555" strokeWidth="1.500" aria-hidden="true">
                      <path d="M7 1 13 3v6q-1 4-6 6-5-2-6-6V3zM7 5v6M5.500 6h3" />
                    </svg>
                  </span>
                </td>
                <td className="pl-3">administrator</td>
                <td className="pl-3">--</td>
                <td className="pl-[30px]">有効にする</td>
                <td />
              </tr>
            </tbody>
          </table>
        </div>
      </div>
    </section>
  );
}

/* ---------- Storage & Snapshots ---------- */

const storageItems = ["ディスク/VJBOD", "ストレージ/スナップショ...", "キャッシュ加速", "外部ストレージ", "リモートディスク", "トポロジー"];
const protectItems = ["スナップショット", "スナップショットレプリカ", "スナップショットボールト"];

function NavHead({ icon, label, fold = false }: { icon: ReactNode; label: string; fold?: boolean }) {
  return (
    <button className="flex h-8 w-full items-center pr-2.5 pl-[22px] text-sm font-bold whitespace-nowrap">
      <span className="mr-2.5 flex w-5 justify-center">{icon}</span>
      {label}
      {fold && <ChevronUp className="ml-auto size-4" strokeWidth={1.5} />}
    </button>
  );
}

function NavItem({ label, active = false }: { label: string; active?: boolean }) {
  return (
    <button
      className={`flex h-[30px] w-full items-center border-l-2 pl-[55px] text-[13px] whitespace-nowrap ${
        active ? "border-white bg-white/15" : "border-transparent"
      }`}
    >
      {label}
    </button>
  );
}

const links = [
  { label: "iSCSI & ファイバー...", d: "M13 4 10 1 2 10l8 9 4-4M8 10h11M12 7v6" },
  { label: "HybridMount", d: "M9 18H5q-4-1-4-5 0-2 2-4 1-7 7-7 4 0 5 2M7 18 15 8M11 6h7v7M18 9q2 5 0 7-1 2-4 2h-3" },
  { label: "SSDプロファイリン...", d: "M3 2h14l2 11v5H1v-5zM1 13h18M1 15.500h18M7 5.500H4.500v2.300h2v2.200H4M11 5.500H8.800v2.300h2v2.200H8.500M13 5.500V10h1q2 0 2-2.300t-2-2.200z" },
  { label: "VJBOD Cloud", d: "M5 5H4L1 12v6h18v-6l-3-7h-1M1 12h18M8 10V2M6 4l2-2 2 2M13 2v8M11 8l2 2 2-2M4 15h1M7 15h1" },
];

function StorageNav() {
  return (
    <nav className="w-[219px] shrink-0 bg-linear-to-b from-[#2351c6] via-[#2144b0] to-[#162f86] pt-5 text-white">
      <NavHead
        label="概要"
        icon={
          <svg viewBox="0 0 20 20" className="size-5" fill="none" stroke="currentColor" aria-hidden="true">
            <circle cx="10" cy="10" r="9.300" strokeWidth="1.300" />
            <circle cx="9.500" cy="12" r="1.500" />
            <path d="m10.500 11 4-4M4 10h1.500M6 6l1 1M10 4v1.500M15 10h1" />
          </svg>
        }
      />
      <NavHead
        fold
        label="ストレージ"
        icon={
          <svg viewBox="0 0 18 18" className="size-[18px]" fill="none" stroke="currentColor" strokeWidth="1.300" aria-hidden="true">
            <ellipse cx="9" cy="3.500" rx="8" ry="2.800" />
            <path d="M1 3.500v11q2 3 8 3t8-3v-11M1 7q2 3 8 3t8-3M1 11q2 3 8 3t8-3" />
          </svg>
        }
      />
      <div className="mt-px">
        {storageItems.map((s, i) => (
          <NavItem key={s} label={s} active={i === 1} />
        ))}
      </div>
      <div className="pt-[3px]">
        <NavHead fold label="データ保護" icon={<CameraLine className="h-[17px] w-5" />} />
        {protectItems.map((s) => (
          <NavItem key={s} label={s} />
        ))}
      </div>
      <hr className="mr-2 mt-[11px] mb-2.5 ml-5 border-white/25" />
      {links.map((l) => (
        <a key={l.label} href="#" className="flex h-[30px] items-center justify-between pr-2.5 pl-[22px] text-sm font-bold">
          <span className="flex items-center gap-2.5 whitespace-nowrap">
            <svg viewBox="0 0 20 20" className="size-5 shrink-0" fill="none" stroke="currentColor" strokeWidth="1.200" aria-hidden="true">
              <path d={l.d} />
            </svg>
            {l.label}
          </span>
          <svg viewBox="0 0 14 14" className="size-3.5 shrink-0" fill="none" stroke="currentColor" strokeWidth="1.300" aria-hidden="true">
            <path d="M7 1H1v12h12V7M9 1h4v4M13 1 6 8" />
          </svg>
        </a>
      ))}
    </nav>
  );
}

interface PoolRow {
  name: string;
  pool: boolean;
  status: string;
  icon: string;
  snaps?: string;
  size: string;
  bolt?: boolean;
  segments: { color: string; pct: number }[];
}

const pools: PoolRow[] = [
  {
    name: "ストレージプール 1", pool: true, status: "準備完了", icon: "good", size: "737.61 GB",
    segments: [{ color: "#39b59a", pct: 5 }, { color: "#008000", pct: 6 }, { color: "#84cf3f", pct: 20 }],
  },
  {
    name: "SystemVol1 (システム)", pool: false, status: "準備完了", icon: "lock", snaps: "18", size: "583.71 GB",
    segments: [{ color: "#4d7fa8", pct: 5 }, { color: "#7ce89a", pct: 9 }],
  },
  {
    name: "ストレージプール 2", pool: true, status: "警告 (低下)", icon: "warn", size: "14.54 TB",
    segments: [{ color: "#008000", pct: 20 }, { color: "#84cf3f", pct: 2 }],
  },
  {
    name: "DataVol1", pool: false, status: "警告 (低下)", icon: "warn", snaps: "9", size: "11.34 TB", bolt: true,
    segments: [{ color: "#4fa87a", pct: 1 }],
  },
];

function UsageBar({ segments, className }: { segments: { color: string; pct: number }[]; className: string }) {
  return (
    <div className={`relative flex bg-[#c6c6c6] ${className}`}>
      {segments.map((s, i) => (
        <span key={i} style={{ width: `${s.pct}%`, backgroundColor: s.color }} />
      ))}
      <span className="absolute -top-px -bottom-px left-[79.5%] w-[3px] bg-[#f00]" />
    </div>
  );
}

function StoragePanel() {
  return (
    <div className="flex grow flex-col border-l border-[#ccc] bg-white pr-[18px] pb-[7px] pl-5">
      <div className="flex h-[42px] items-center text-[13px] text-[#333]">
        <h2 className="ml-1.5 text-base font-bold whitespace-nowrap text-black">ストレージ領域</h2>
        <p className="ml-1 text-[13px] font-medium whitespace-nowrap">
          ストレージプール: <span className="text-[#247]">2</span>, ボリューム: <span className="text-[#247]">2</span>, LUN: <span className="text-[#247]">0</span>
        </p>
        <div className="ml-auto flex items-center gap-2 pr-3.5">
          <BoxButton className="h-6 w-[125px]">作成</BoxButton>
          <BoxButton className="h-6 w-[162px]">スナップショット</BoxButton>
          <BoxButton className="h-6 w-[125px]" caret={false}>管理</BoxButton>
          <button aria-label="更新">
            <Refresh className="size-5" />
          </button>
        </div>
      </div>
      <div className="grow border border-[#ccc]">
        <table className="w-full table-fixed text-[13px] text-[#333]">
          <colgroup>
            <col />
            <col className="w-[191px]" />
            <col className="w-[181px]" />
            <col className="w-[160px]" />
            <col className="w-[103px]" />
            <col className="w-[103px]" />
            <col className="w-[183px]" />
          </colgroup>
          <thead>
            <tr className="h-7 bg-[#838a99] text-left whitespace-nowrap text-white *:border-l *:border-white/30 *:font-normal">
              <th className="border-l-0! pl-4">名前/エイリアス</th>
              <th className="pl-3.5">ステータス</th>
              <th className="pl-3.5">タイプ</th>
              <th className="pl-3">スナップショットレ...</th>
              <th className="pl-3">スナップ...</th>
              <th className="pr-3.5 text-right">容量</th>
              <th className="pl-3.5">使用率 (%)</th>
            </tr>
          </thead>
          <tbody>
            {pools.map((p) => (
              <tr key={p.name} className={`h-7 whitespace-nowrap ${p.name === "ストレージプール 2" ? "bg-[#bbe6e3]" : ""} ${p.pool ? "font-bold" : ""}`}>
                <td>
                  {p.pool ? (
                    <span className="flex items-center gap-1 pl-3.5">
                      <Chevron className="h-2.5 w-4" />
                      {p.name}
                    </span>
                  ) : (
                    <span className="flex items-center pl-[17px]">
                      <span className="mt-2 w-[13px]">{p.bolt && <Bolt className="h-3 w-[9px]" />}</span>
                      <Drive className="mt-1 mr-1.5 h-4 w-[18px]" />
                      <span className="mb-1.5">{p.name}</span>
                    </span>
                  )}
                </td>
                <td className="pl-2.5">
                  <span className="flex items-center gap-[7px]">
                    {p.icon === "good" && <Good />}
                    {p.icon === "warn" && <Warn />}
                    {p.icon === "lock" && <Unlock className="size-4" body="#2a62d0" />}
                    {p.status}
                  </span>
                </td>
                <td className="pl-2.5">{p.pool ? "" : "シンボリューム"}</td>
                <td className="pl-2.5">{p.pool ? "" : "--"}</td>
                <td className="pl-3">
                  {p.snaps && (
                    <span className="flex items-center">
                      <Camera className="mr-1.5 h-3 w-4 text-[#0080f0]" />:
                      <a href="#" className="ml-1 text-[#00f] underline">
                        {p.snaps}
                      </a>
                    </span>
                  )}
                </td>
                <td className="text-right">{p.size}</td>
                <td className="pr-6 pl-2.5">
                  <UsageBar segments={p.segments} className="h-[7px]" />
                </td>
              </tr>
            ))}
          </tbody>
        </table>
      </div>
    </div>
  );
}

const poolFacts = [
  ["容量", "14.54 TB"],
  ["割り当て済み", "3.21 TB"],
  ["未割当", "11.34 TB"],
];

function PoolDialog() {
  return (
    <div role="dialog" aria-label="ストレージプール 2 管理" className="absolute top-[274px] left-[271px] flex h-[520px] w-[910px] flex-col bg-[#fafafa] text-xs text-[#222] shadow-[0_0_8px_rgba(0,0,0,0.8)]">
      <div className="flex h-[73px] flex-col border-b border-[#aaa] pr-2 pl-9">
        <div className="flex h-[47px] items-center">
          <h2 className="mt-1.5 text-xl font-bold whitespace-nowrap text-black">ストレージプール 2 管理</h2>
          <div className="mb-4 ml-auto flex gap-1 text-[#888]">
            <button aria-label="拡大">
              <Plus className="size-4" strokeWidth={1.5} />
            </button>
            <button aria-label="閉じる">
              <X className="size-4" strokeWidth={1.5} />
            </button>
          </div>
        </div>
        <button className="-mb-0.5 h-7 w-[124px] border-b-2 border-black pb-0.5 text-center text-[11px] font-bold whitespace-nowrap text-black">ストレージプール</button>
      </div>

      <div className="flex pr-[46px] pl-9 pt-[18px]">
        <p className="pt-1.5 text-[11px] font-bold">名前/エイリアス: ストレージプール 2</p>
        <BoxButton className="ml-auto h-[27px] w-[140px] bg-white">アクション</BoxButton>
        <button aria-label="更新" className="ml-2">
          <Refresh className="size-5" />
        </button>
      </div>

      <div className="flex h-[317px]">
        <div className="grow pr-[35px] pl-9">
          <div className="flex justify-between">
            <dl className="pt-1">
              {poolFacts.map(([k, v]) => (
                <div key={k} className="flex h-[27px] items-center gap-2.5">
                  <dt className="text-[#777]">{k}：</dt>
                  <dd>{v}</dd>
                </div>
              ))}
              <div className="flex h-[27px] items-center gap-2.5">
                <dt className="text-[#777]">ステータス：</dt>
                <dd className="text-[#f58220]">警告(低下)</dd>
              </div>
            </dl>
            <div className="w-[411px] pt-[27px] text-black">
              <UsageBar className="h-[7px]" segments={[{ color: "#008000", pct: 20 }, { color: "#84cf3f", pct: 2 }]} />
              <ul className="mt-[9px] whitespace-nowrap">
                <li className="flex h-[30px] items-center">
                  <span className="mr-[7px] size-2.5 border border-[#0ff]" />
                  使用されたスナップショット: 0.00% (34.50 MB)
                </li>
                <li className="flex h-[30px] items-center">
                  <span className="mr-[7px] size-2.5 bg-[#008000]" />
                  プール保証されたスナップショット領域: 20.01% (2.91 TB)
                </li>
                <li className="flex h-[30px] items-center">
                  <span className="mr-[7px] size-2.5 bg-[#84cf3f]" />
                  ボリューム/LUN: 2.05% (306.00 GB)
                  <span className="mr-[7px] ml-2 size-2.5 bg-[#c6c6c6]" />
                  未割当: 77.97% (11.34 TB)
                </li>
                <li className="flex h-7 items-center">
                  <span className="mr-[11px] ml-1 h-2.5 w-0.5 bg-[#f00]" />
                  警告: 80 %
                </li>
              </ul>
            </div>
          </div>

          <div className="flex h-[35px] items-start justify-between">
            <h3 className="pt-1.5 text-[11px] font-bold whitespace-nowrap">ストレージプール 2 の RAID グループ</h3>
            <BoxButton className="h-[27px] w-[140px] shrink-0 bg-white">管理</BoxButton>
          </div>

          <table className="w-full table-fixed border border-[#aaa] bg-[#ddfdfd] text-[11px] whitespace-nowrap text-black">
            <colgroup>
              <col className="w-[146px]" />
              <col className="w-[74px]" />
              <col className="w-[88px]" />
              <col className="w-[63px]" />
              <col className="w-[81px]" />
              <col className="w-[104px]" />
              <col />
              <col className="w-[105px]" />
            </colgroup>
            <thead>
              <tr className="h-[29px] bg-[#808694] text-left text-[13px] text-white *:border-r *:border-white *:pl-3 *:font-normal">
                <th>名前/エイリアス</th>
                <th>容量</th>
                <th>状態</th>
                <th>BBM</th>
                <th>ビット...</th>
                <th>RAID タイプ</th>
                <th>再同期の速度</th>
                <th>優先度</th>
              </tr>
            </thead>
            <tbody className="*:*:border-r *:*:border-[#b5b5b5]">
              <tr className="h-7 font-bold">
                <td className="pl-5">
                  <span className="flex items-center gap-1.5">
                    <Chevron className="h-2.5 w-[15px]" />
                    RAID グループ 2
                  </span>
                </td>
                <td className="pl-3">14.54 TB</td>
                <td className="pl-3">
                  <span className="flex items-center gap-[7px]">
                    <Warn className="mb-1 size-4" />
                    低下
                  </span>
                </td>
                <td className="pl-3">いいえ</td>
                <td className="pl-3">無効</td>
                <td className="pl-3">RAID 1</td>
                <td className="pl-3.5">--</td>
                <td className="pl-3">再同期優先 (高速)</td>
              </tr>
              <tr className="h-7">
                <td className="pl-[42px]">NAS ホスト: 3.5" ...</td>
                <td className="pl-3">14.55 TB</td>
                <td className="pl-3">
                  <span className="flex items-center gap-[7px]">
                    <Good />
                    良好
                  </span>
                </td>
                <td />
                <td />
                <td />
                <td />
                <td />
              </tr>
              <tr className="h-7">
                <td className="pl-[42px]">NAS ホスト: 3.5" ...</td>
                <td className="pl-3">--</td>
                <td className="overflow-hidden pl-3">
                  <span className="flex items-center gap-[7px]">
                    <Bad className="size-4 shrink-0" />
                    存在しません
                  </span>
                </td>
                <td />
                <td />
                <td />
                <td />
                <td />
              </tr>
            </tbody>
          </table>
        </div>
        <div className="mt-1.5 flex w-[17px] shrink-0 flex-col items-center bg-[#f0f0f0] py-1.5">
          <Caret className="size-2 rotate-180 text-[#a0a0a0]" />
          <div className="mt-0.5 h-[171px] w-[13px] bg-[#c1c1c1]" />
          <Caret className="mt-auto size-2 text-[#444]" />
        </div>
      </div>
      <div className="flex justify-end pt-[31px] pr-[35px]">
        <button className="h-[27px] w-[124px] border border-[#555] bg-white">閉じる</button>
      </div>
    </div>
  );
}

function StorageWindow() {
  return (
    <section className="absolute top-[546px] right-[3px] bottom-0 left-[860px] flex flex-col shadow-[0_0_4px_rgba(0,0,0,0.5)]">
      <TitleBar title="ストレージ&スナップショット" />
      <div className="h-2 bg-linear-to-r from-[#1250ee] via-[#18a8a0] to-[#00e0f8]" />
      <div className="flex h-12 items-center border-b border-[#bbb] bg-white pr-[27px] pl-7">
        <StorageLogo className="mb-1.5 h-7 w-[27px]" />
        <h1 className="mb-1.5 ml-2 text-base font-bold whitespace-nowrap text-[#222]">ストレージ&スナップショット</h1>
        <div className="ml-auto flex items-center text-[#222]">
          <button className="flex h-[26px] w-[218px] items-center justify-between rounded-lg border border-[#222] px-2 text-sm whitespace-nowrap">
            <svg viewBox="0 0 20 18" className="h-[18px] w-5" aria-hidden="true">
              <path d="M3 2h14l3 12H0z" fill="#d8e4f0" />
              <path d="M5 0h14v6H5z" fill="#1465b5" />
              <path d="M0 14h20v4H0z" fill="#555" />
              <path d="M2 15.500h2v1H2z" fill="#9f3" />
            </svg>
            外部ストレージデバイス
            <Caret />
          </button>
          <span className="mr-[18px] ml-2.5 h-5 w-px bg-[#888]" />
          <button aria-label="ウィザード">
            <svg viewBox="0 0 20 20" className="size-5" fill="none" stroke="currentColor" strokeWidth="1.600" aria-hidden="true">
              <path d="m3 2 4 1.500L10.500 1l.300 4L14 7.500l-3.500 1.500-1.300 4L6.500 10l-4.500.300L4.500 6.500zM10.500 10l8 8.500M12 8.500l8 8.500" />
              <path d="M14 1v1.500M17 3v1.500M16 7h1.500M3 14v1.500M6 17v1.500M9 15v1.500" />
            </svg>
          </button>
          <button aria-label="ヘルプ" className="ml-[11px]">
            <CircleHelp className="size-[22px]" />
          </button>
          <span className="mx-[15px] h-5 w-px bg-[#888]" />
          <button aria-label="設定">
            <Gear className="size-[25px]" />
          </button>
        </div>
      </div>
      <div className="flex min-h-0 grow">
        <StorageNav />
        <StoragePanel />
      </div>
      <div className="absolute inset-0 overflow-hidden bg-black/40">
        <PoolDialog />
      </div>
    </section>
  );
}

/* ---------- desktop ---------- */

function DesktopIcons() {
  return (
    <>
      <div className="absolute top-[333px] left-[1100px] h-[500px] w-[300px] bg-linear-165 from-[#62e2e4] from-40% to-[#3590cc] to-50%" />
      <div className="absolute top-[216px] left-[1225px] flex size-[107px] items-center justify-center rounded-[28px] bg-linear-to-b from-white to-[#c3cfda]">
        <Cloud className="size-24 text-[#4d67f8]" strokeWidth={2.8} />
      </div>
      <span className="absolute top-[336px] left-[1214px] text-xl font-bold text-white [text-shadow:0_1px_2px_#1a6a80]">myQNAPcloud</span>
      <svg viewBox="0 0 107 107" className="absolute top-[453px] left-[1225px] size-[107px]" aria-hidden="true">
        <rect width="107" height="107" rx="28" fill="#1b3a92" />
        <path d="M40 107q10-40 50-50l17 5v17q-3 28-28 28z" fill="#0a1c48" />
        <path d="m75 45 32 10-25 35-20-10z" fill="#5d7cb8" />
        <path d="M82 76q14 10 18 26" fill="none" stroke="#cdd8f2" strokeWidth="1.500" />
        <path d="M53 10q20 10 35 16 4 50-35 68Z" fill="#2f70ee" stroke="#b4ccff" strokeWidth="5" />
        <path d="M53 52q12-4 13-14v20q-4 14-13 16z" fill="#2fc4e8" />
        <circle cx="90" cy="95" r="3.500" fill="none" stroke="#8fa5d8" strokeWidth="2" />
      </svg>
      <div className="absolute bottom-2.5 left-9 flex flex-col items-start">
        <button aria-label="ごみ箱">
          <svg viewBox="0 0 60 76" className="h-[76px] w-[60px]" fill="none" stroke="#fff" strokeWidth="2.500" aria-hidden="true">
            <path d="M0 9h60M17 8q1-6.500 4-6.500h16q3 0 4 6.500M5 14h50l-2.500 56q-.500 4-4 4h-37q-3.500 0-4-4z" />
          </svg>
        </button>
        <span className="mt-[30px] ml-1 font-['Roboto'] text-[40px] leading-10 font-medium text-[#a18dac]">QTS</span>
      </div>
    </>
  );
}

export default function App() {
  return (
    <main className="relative h-screen overflow-hidden bg-[#0d0430] font-['Liberation_Sans','Noto_Sans_CJK_JP',sans-serif] leading-normal" lang="ja">
      <div className="absolute inset-x-0 top-[700px] bottom-0 bg-[radial-gradient(ellipse_560px_420px_at_900px_110px,#4f35d2,#4f35d200),radial-gradient(ellipse_460px_190px_at_0px_290px,#5c1f62,#5c1f6200),linear-gradient(to_bottom,#5a2c9c_120px,#552588_230px,#481d6a_330px,#3d1759_430px,#371960)]" />
      <TopBar />
      <DesktopIcons />
      <FileStation />
      <ControlPanel />
      <StorageWindow />
    </main>
  );
}
